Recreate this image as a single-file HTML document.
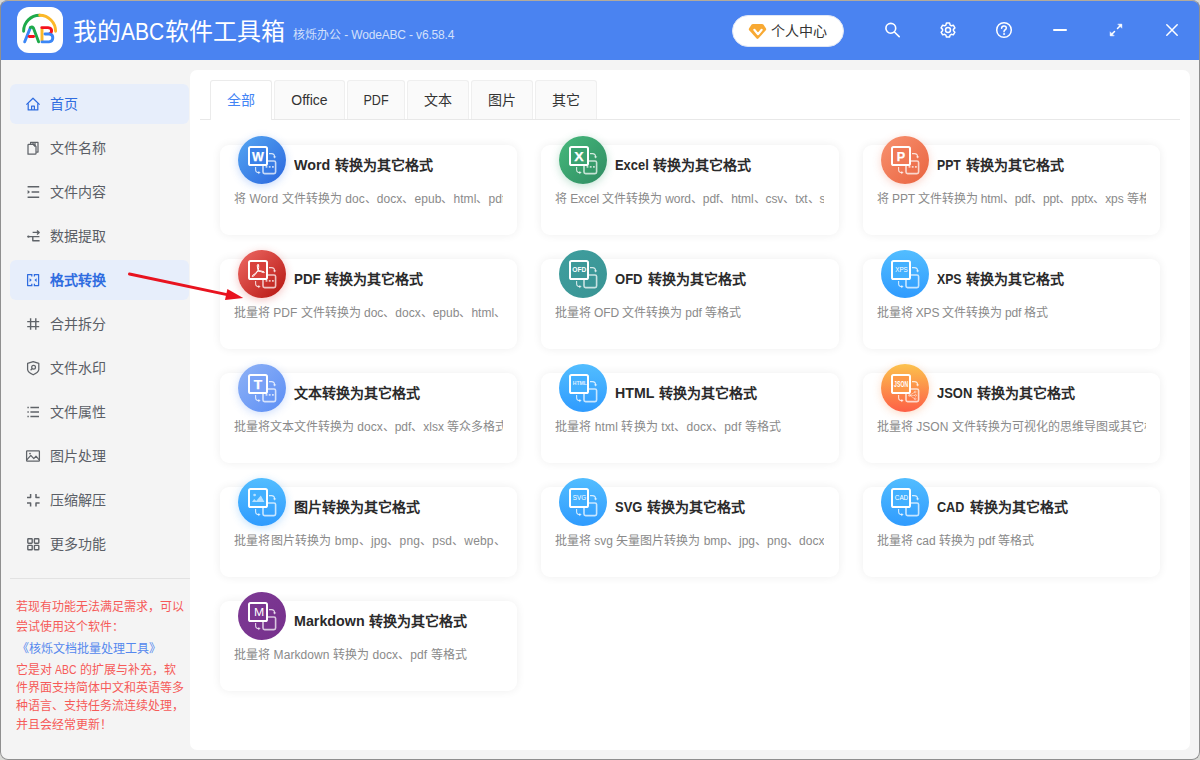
<!DOCTYPE html>
<html lang="zh-CN">
<head>
<meta charset="utf-8">
<title>ABC</title>
<style>
*{box-sizing:border-box;margin:0;padding:0}
html,body{width:1200px;height:760px;overflow:hidden;background:#d9dad6;font-family:"Liberation Sans",sans-serif;}
#win{position:absolute;left:0;top:0;width:1200px;height:760px;border-radius:8px;background:#f4f4f4;overflow:hidden}
#frame{position:absolute;left:0;top:0;width:1200px;height:760px;border-radius:8px;border:1px solid #8f8f8f;border-top-color:#b3aa9b;z-index:100}
#tb{position:absolute;left:0;top:0;width:1200px;height:60px;background:#4a83f1}
.abs{position:absolute;white-space:nowrap}
#logo{position:absolute;left:17.3px;top:7.2px;width:45.5px;height:45.5px;border-radius:12px;background:#fff}
.ttl{top:17px;font-size:24px;line-height:30px;color:#fff}
.sub{top:26.5px;font-size:12px;line-height:16px;color:#d3e0fb;white-space:pre}
#pill{position:absolute;left:732px;top:15px;width:112px;height:32px;border-radius:16px;background:#fff;border:1px solid #dfe6f5}
#pill span{position:absolute;left:38px;top:6px;font-size:14px;line-height:18px;color:#333;white-space:nowrap}
.hl{position:absolute;left:10px;width:179px;height:40px;border-radius:6px;background:#e7eefb}
.si{position:absolute;left:50px;font-size:14px;line-height:20px;color:#5a5e66;white-space:nowrap}
.sic{position:absolute;left:25px;width:16px;height:16px}
#sdiv{position:absolute;left:10px;top:578px;width:180px;height:1px;background:#e2e2e2}
.red{position:absolute;left:16px;font-size:12px;line-height:16px;color:#f65a58;white-space:nowrap}
#main{position:absolute;left:190px;top:70px;width:1000px;height:680px;background:#fff;border-radius:7px}
#tabline{position:absolute;left:200px;top:119px;width:980px;height:1px;background:#e8e8e8}
.tab{position:absolute;top:80px;height:39px;background:#fafafa;border:1px solid #efefef;border-bottom:none;border-radius:3px 3px 0 0;font-size:14px;line-height:39px;color:#333;text-align:center;white-space:nowrap}
.tab.on{background:#fff;color:#4384f5;height:40px;border-color:#ebebeb}
.card{position:absolute;width:297.33px;height:90px;background:#fff;border-radius:9px;box-shadow:0 0 10px rgba(0,0,0,0.07)}
.ct{position:absolute;left:74px;top:10px;font-size:14px;line-height:20px;font-weight:bold;color:#2a2a2a;white-space:nowrap}
.cd{position:absolute;left:14px;top:46px;width:269.3px;overflow:hidden;font-size:12px;line-height:16px;color:#8a8a8a;white-space:nowrap}
.ic{position:absolute;left:18px;top:-9px;width:48px;height:48px;border-radius:50%}
.ic svg{position:absolute;left:0;top:0}
</style>
</head>
<body>
<div id="win">

<div id="tb">
  <div id="logo"></div>
  <svg class="abs" style="left:17.3px;top:7.2px" width="45.5" height="45.5" viewBox="0 0 45.5 45.5" fill="none" stroke-linecap="round" stroke-linejoin="round">
    <path d="M6.6 24.2 A16 16 0 0 1 22.7 8.2" stroke="#1eaa4a" stroke-width="2.9"/>
    <path d="M22.7 8.2 A16 16 0 0 1 38.6 24.2" stroke="#fbb829" stroke-width="2.9"/>
    <path d="M7.7 34.8 L13.4 20.6" stroke="#3b86f6" stroke-width="2.9"/>
    <path d="M13.4 20.6 Q15 19.4 16.4 21 L21.6 34.8" stroke="#1eaa4a" stroke-width="2.9"/>
    <path d="M12.2 29.5 L16.6 29.5" stroke="#f5121d" stroke-width="2.9"/>
    <path d="M25 21.4 L25 33.6" stroke="#fbb829" stroke-width="2.9"/>
    <path d="M24.8 20.6 L31 20.6 Q34.8 21 34.6 24 Q34.4 26 32.8 26.6" stroke="#f5121d" stroke-width="2.9"/>
    <path d="M28 27 L32.4 27 Q36 27.6 35.8 31 Q35.6 34.6 32 34.9 L25 34.9" stroke="#3b86f6" stroke-width="2.9"/>
  </svg>
  <div class="abs ttl" style="left:73px">我的</div><div class="abs ttl" style="left:121.4px;transform-origin:0 50%;transform:scaleX(0.877)">ABC</div><div class="abs ttl" style="left:164.7px">软件工具箱</div>
  <div class="abs sub" style="left:293px">核烁办公</div><div class="abs sub" style="left:341px;letter-spacing:-0.16px"> - WodeABC - v6.58.4</div>
  <div id="pill"><span>个人中心</span></div>
  <svg class="abs" style="left:748px;top:23px" width="19" height="17" viewBox="0 0 19 17">
    <path d="M5 1 L14 1 Q15 1 15.6 1.8 L18 5.4 Q18.6 6.4 17.8 7.3 L10.4 15.6 Q9.5 16.5 8.6 15.6 L1.2 7.3 Q0.4 6.4 1 5.4 L3.4 1.8 Q4 1 5 1 Z" fill="#f8a933"/>
    <path d="M6.3 6.8 L10 11.2 L13.7 6.8" fill="none" stroke="#fff" stroke-width="2.1" stroke-linecap="round" stroke-linejoin="round"/>
  </svg>
  <svg class="abs" style="left:882.5px;top:20px" width="20" height="20" viewBox="0 0 20 20" fill="none" stroke="#fff" stroke-width="1.6" stroke-linecap="round">
    <circle cx="7.8" cy="8.3" r="4.9"/><path d="M11.4 12 L16.2 16.6"/>
  </svg>
  <svg class="abs" style="left:938px;top:20px" width="20" height="20" viewBox="0 0 20 20" fill="none" stroke="#fff" stroke-width="1.6" stroke-linejoin="round"><g transform="translate(10 10.05) scale(0.92) translate(-10 -10.05)">
    <path d="M8.3 2.4 L11.7 2.4 L12.3 4.6 L13.6 5.4 L15.8 4.8 L17.5 7.7 L15.9 9.3 L15.9 10.8 L17.5 12.4 L15.8 15.3 L13.6 14.7 L12.3 15.5 L11.7 17.7 L8.3 17.7 L7.7 15.5 L6.4 14.7 L4.2 15.3 L2.5 12.4 L4.1 10.8 L4.1 9.3 L2.5 7.7 L4.2 4.8 L6.4 5.4 L7.7 4.6 Z"/>
    <circle cx="10" cy="10.05" r="2.7"/></g>
  </svg>
  <svg class="abs" style="left:994px;top:20px" width="20" height="20" viewBox="0 0 20 20" fill="none" stroke="#fff" stroke-width="1.5" stroke-linecap="round">
    <circle cx="10" cy="10" r="7.3"/>
    <path d="M7.6 8.2 Q7.7 5.9 10 5.9 Q12.3 5.9 12.3 8 Q12.3 9.3 10.9 10 Q10 10.5 10 11.7"/>
    <circle cx="10" cy="14" r="0.6" fill="#fff" stroke-width="0.8"/>
  </svg>
  <div class="abs" style="left:1053px;top:29px;width:14px;height:2px;background:#fff;border-radius:1px"></div>
  <svg class="abs" style="left:1106px;top:20px" width="20" height="20" viewBox="0 0 20 20" fill="#fff" stroke="#fff" stroke-width="1.5" stroke-linecap="round">
    <path d="M11.5 8.5 L15 5"/><path d="M8.5 11.5 L5 15"/>
    <path d="M12.2 4.2 L15.8 4.2 L15.8 7.8 Z" stroke-width="0.6" stroke-linejoin="round"/>
    <path d="M7.8 15.8 L4.2 15.8 L4.2 12.2 Z" stroke-width="0.6" stroke-linejoin="round"/>
  </svg>
  <svg class="abs" style="left:1162px;top:20px" width="20" height="20" viewBox="0 0 20 20" fill="none" stroke="#fff" stroke-width="1.5" stroke-linecap="round">
    <path d="M4.8 4.8 L15.2 15.2 M15.2 4.8 L4.8 15.2"/>
  </svg>
</div>

<div class="hl" style="top:84px"></div>
<svg class="sic" style="top:96px" viewBox="0 0 16 16" fill="none" stroke="#2f6ce0" stroke-width="1.25" stroke-linejoin="round" stroke-linecap="butt"><path d="M1.4 8.6 L8 2.2 L14.6 8.6"/><path d="M3.2 7.2 L3.2 13.9 L12.8 13.9 L12.8 7.2"/><path d="M6.6 13.9 L6.6 10.2 L9.4 10.2 L9.4 13.9"/></svg>
<div class="si" style="top:94px;color:#2f6ce0;">首页</div>
<svg class="sic" style="top:140px" viewBox="0 0 16 16" fill="none" stroke="#5f6368" stroke-width="1.25" stroke-linejoin="round" stroke-linecap="butt"><path d="M3 4.8 L3 14.2 L10.2 14.2 Q11 14.2 11 13.4 L11 6.4 L9 4.4 L3.8 4.4 Q3 4.4 3 5.2"/><path d="M5.6 4.2 L5.6 2.4 L13 2.4 L13 12 L11.2 12"/><path d="M8 2.6 L8 4.4 L10 6.4 L10 2.6"/></svg>
<div class="si" style="top:138px;">文件名称</div>
<svg class="sic" style="top:184px" viewBox="0 0 16 16" fill="none" stroke="#5f6368" stroke-width="1.25" stroke-linejoin="round" stroke-linecap="butt"><path d="M2.6 2.8 L14.2 2.8 M6.6 8 L14.2 8 M2.6 13.2 L14.2 13.2" stroke-width="1.5"/><path d="M2.6 6 L5 8 L2.6 10 Z" fill="#5f6368" stroke="none"/></svg>
<div class="si" style="top:182px;">文件内容</div>
<svg class="sic" style="top:228px" viewBox="0 0 16 16" fill="none" stroke="#5f6368" stroke-width="1.25" stroke-linejoin="round" stroke-linecap="butt"><path d="M7.6 4.4 L14 4.4 M12 2.4 L14.2 4.4 L12 6.4 M3.4 8.6 L14.4 8.6 M7.8 8.8 L7.8 12.8 L14.6 12.8" stroke-width="1.4"/><circle cx="3.4" cy="8.6" r="1.2" fill="#5f6368" stroke="none"/></svg>
<div class="si" style="top:226px;">数据提取</div>
<div class="hl" style="top:260px"></div>
<svg class="sic" style="top:272px" viewBox="0 0 16 16" fill="none" stroke="#2f6ce0" stroke-width="1.25" stroke-linejoin="round" stroke-linecap="butt"><path d="M6.8 2.6 L2.6 2.6 L2.6 13.6 L6.8 13.6 M9.4 2.6 L13.6 2.6 L13.6 13.6 L9.4 13.6 M6.8 2 L6.8 4.4 M6.8 11.8 L6.8 14.2 M9.4 2 L9.4 4.4 M9.4 11.8 L9.4 14.2"/><path d="M4.6 6.2 L6.8 8.1 L4.6 10 Z M11.6 6.2 L9.4 8.1 L11.6 10 Z" fill="#2f6ce0" stroke="none"/></svg>
<div class="si" style="top:270px;color:#2f6ce0;font-weight:bold;">格式转换</div>
<svg class="sic" style="top:316px" viewBox="0 0 16 16" fill="none" stroke="#5f6368" stroke-width="1.25" stroke-linejoin="round" stroke-linecap="butt"><path d="M5.6 2.2 L5.6 13.8 M10.8 2.2 L10.8 13.8 M2.2 5.6 L14.2 5.6 M2.2 10.6 L14.2 10.6" stroke-width="1.4"/></svg>
<div class="si" style="top:314px;">合并拆分</div>
<svg class="sic" style="top:360px" viewBox="0 0 16 16" fill="none" stroke="#5f6368" stroke-width="1.25" stroke-linejoin="round" stroke-linecap="butt"><path d="M8.2 1.6 L13.8 3.4 L13.8 9.6 Q13.4 12.4 8.2 14.8 Q3 12.4 2.6 9.6 L2.6 3.4 Z"/><circle cx="8.6" cy="7.2" r="1.9"/><path d="M7.2 8.6 L5.6 10.2"/></svg>
<div class="si" style="top:358px;">文件水印</div>
<svg class="sic" style="top:404px" viewBox="0 0 16 16" fill="none" stroke="#5f6368" stroke-width="1.25" stroke-linejoin="round" stroke-linecap="butt"><path d="M5.4 3.4 L14 3.4 M5.4 8 L14 8 M5.4 12.6 L14 12.6" stroke-width="1.5"/><path d="M2.4 3.4 L3.8 3.4 M2.4 8 L3.8 8 M2.4 12.6 L3.8 12.6" stroke-width="1.5"/></svg>
<div class="si" style="top:402px;">文件属性</div>
<svg class="sic" style="top:448px" viewBox="0 0 16 16" fill="none" stroke="#5f6368" stroke-width="1.25" stroke-linejoin="round" stroke-linecap="butt"><rect x="1.6" y="2.8" width="12.8" height="10.4" rx="0.6"/><path d="M1.8 11.8 L5.8 7.4 L8.8 10.6 L11 8.2 L14.2 11.8"/><circle cx="5" cy="5.6" r="0.9" fill="#5f6368" stroke="none"/></svg>
<div class="si" style="top:446px;">图片处理</div>
<svg class="sic" style="top:492px" viewBox="0 0 16 16" fill="none" stroke="#5f6368" stroke-width="1.25" stroke-linejoin="round" stroke-linecap="butt"><path d="M2 5.6 L5.6 5.6 L5.6 2 M11 2 L11 5.6 L14.6 5.6 M2 11 L5.6 11 L5.6 14.6 M11 14.6 L11 11 L14.6 11" stroke-width="1.5"/></svg>
<div class="si" style="top:490px;">压缩解压</div>
<svg class="sic" style="top:536px" viewBox="0 0 16 16" fill="none" stroke="#5f6368" stroke-width="1.25" stroke-linejoin="round" stroke-linecap="butt"><rect x="2.8" y="2.8" width="4.4" height="4.4" rx="0.6" stroke-width="1.4"/><rect x="9.4" y="2.8" width="4.4" height="4.4" rx="0.6" stroke-width="1.4"/><rect x="2.8" y="9.4" width="4.4" height="4.4" rx="0.6" stroke-width="1.4"/><rect x="9.4" y="9.4" width="4.4" height="4.4" rx="0.6" stroke-width="1.4"/></svg>
<div class="si" style="top:534px;">更多功能</div>
<div id="sdiv"></div>
<div class="red" style="top:599px;left:16px;">若现有功能无法满足需求，可以</div>
<div class="red" style="top:618.5px;left:16px;">尝试使用这个软件：</div>
<div class="red" style="top:640.5px;left:16.8px;color:#5588ee;">《核烁文档批量处理工具》</div>
<div class="red" style="top:661.6px;left:16px;">它是对</div>
<div class="red" style="top:661.6px;left:55.4px;transform-origin:0 50%;transform:scaleX(0.87);">ABC</div>
<div class="red" style="top:661.6px;left:80.4px;">的扩展与补充，软</div>
<div class="red" style="top:680.3px;left:16px;">件界面支持简体中文和英语等多</div>
<div class="red" style="top:698.3px;left:16px;">种语言、支持任务流连续处理，</div>
<div class="red" style="top:716.8px;left:16px;">并且会经常更新！</div>

<div id="main"></div>
<div id="tabline"></div>
<div class="tab on" style="left:210px;width:62px">全部</div>
<div class="tab" style="left:274px;width:71px">Office</div>
<div class="tab" style="left:347px;width:58px"><span style="display:inline-block;transform:scaleX(0.9)">PDF</span></div>
<div class="tab" style="left:407px;width:62px">文本</div>
<div class="tab" style="left:471px;width:62px">图片</div>
<div class="tab" style="left:535px;width:62px">其它</div>

<div class="card" style="left:220px;top:145px"><div class="abs" style="left:0px;top:0"><div class="ic" style="background:linear-gradient(135deg,#55a6f2,#2a66de);box-shadow:0 2px 9px rgba(66,133,244,0.3)"><svg width="48" height="48" viewBox="0 0 48 48" fill="none">
<rect x="25" y="25" width="12.6" height="12.6" rx="1.6" stroke="#fff" stroke-opacity="0.72" stroke-width="1.6"/>
<path d="M27.6 30.8 L29.4 30.8 M30.8 30.8 L32.6 30.8 M34 30.8 L35.8 30.8" stroke="#fff" stroke-opacity="0.7" stroke-width="1.7"/>
<path d="M31 17.6 L33.4 17.6 Q36.6 17.6 36.6 21" stroke="#fff" stroke-opacity="0.78" stroke-width="1.1"/><path d="M34.9 20.4 L36.6 22.6 L38.3 20.4 Z" fill="#fff" fill-opacity="0.75"/>
<path d="M17.6 31 L17.6 33.4 Q17.6 36.6 21 36.6" stroke="#fff" stroke-opacity="0.78" stroke-width="1.1"/><path d="M20.4 34.9 L22.6 36.6 L20.4 38.3 Z" fill="#fff" fill-opacity="0.75"/>
<rect x="11" y="11" width="18" height="18" rx="1.6" stroke="#fff" stroke-width="2" fill="#3b82e8"/>
<text x="20" y="25" font-family="Liberation Sans, sans-serif" fill="#fff" text-anchor="middle" lengthAdjust="spacingAndGlyphs" font-weight="bold" font-size="13.5" stroke="#fff" stroke-width="0.25" textLength="11.8">W</text>
</svg></div><div class="ct" style="transform-origin:0 50%;transform:scaleX(1.02)">Word</div><div class="ct" style="left:115.1px;">转换为其它格式</div><div class="cd" style="letter-spacing:0.06px">将 Word 文件转换为 doc、docx、epub、html、pdf、txt 等</div></div></div>
<div class="card" style="left:541.33px;top:145px"><div class="abs" style="left:-0.33px;top:0"><div class="ic" style="background:linear-gradient(135deg,#46b97c,#2f8c62);box-shadow:0 2px 9px rgba(52,160,108,0.3)"><svg width="48" height="48" viewBox="0 0 48 48" fill="none">
<rect x="25" y="25" width="12.6" height="12.6" rx="1.6" stroke="#fff" stroke-opacity="0.72" stroke-width="1.6"/>
<path d="M27.6 30.8 L29.4 30.8 M30.8 30.8 L32.6 30.8 M34 30.8 L35.8 30.8" stroke="#fff" stroke-opacity="0.7" stroke-width="1.7"/>
<path d="M31 17.6 L33.4 17.6 Q36.6 17.6 36.6 21" stroke="#fff" stroke-opacity="0.78" stroke-width="1.1"/><path d="M34.9 20.4 L36.6 22.6 L38.3 20.4 Z" fill="#fff" fill-opacity="0.75"/>
<path d="M17.6 31 L17.6 33.4 Q17.6 36.6 21 36.6" stroke="#fff" stroke-opacity="0.78" stroke-width="1.1"/><path d="M20.4 34.9 L22.6 36.6 L20.4 38.3 Z" fill="#fff" fill-opacity="0.75"/>
<rect x="11" y="11" width="18" height="18" rx="1.6" stroke="#fff" stroke-width="2" fill="#3aa371"/>
<text x="20" y="25" font-family="Liberation Sans, sans-serif" fill="#fff" text-anchor="middle" lengthAdjust="spacingAndGlyphs" font-weight="bold" font-size="13.5" stroke="#fff" stroke-width="0.25" textLength="9.4">X</text>
</svg></div><div class="ct" style="transform-origin:0 50%;transform:scaleX(0.922)">Excel</div><div class="ct" style="left:111.8px;">转换为其它格式</div><div class="cd" style="letter-spacing:-0.08px">将 Excel 文件转换为 word、pdf、html、csv、txt、svg 等</div></div></div>
<div class="card" style="left:862.67px;top:145px"><div class="abs" style="left:0.33px;top:0"><div class="ic" style="background:linear-gradient(135deg,#f89270,#e9633f);box-shadow:0 2px 9px rgba(240,120,90,0.3)"><svg width="48" height="48" viewBox="0 0 48 48" fill="none">
<rect x="25" y="25" width="12.6" height="12.6" rx="1.6" stroke="#fff" stroke-opacity="0.72" stroke-width="1.6"/>
<path d="M27.6 30.8 L29.4 30.8 M30.8 30.8 L32.6 30.8 M34 30.8 L35.8 30.8" stroke="#fff" stroke-opacity="0.7" stroke-width="1.7"/>
<path d="M31 17.6 L33.4 17.6 Q36.6 17.6 36.6 21" stroke="#fff" stroke-opacity="0.78" stroke-width="1.1"/><path d="M34.9 20.4 L36.6 22.6 L38.3 20.4 Z" fill="#fff" fill-opacity="0.75"/>
<path d="M17.6 31 L17.6 33.4 Q17.6 36.6 21 36.6" stroke="#fff" stroke-opacity="0.78" stroke-width="1.1"/><path d="M20.4 34.9 L22.6 36.6 L20.4 38.3 Z" fill="#fff" fill-opacity="0.75"/>
<rect x="11" y="11" width="18" height="18" rx="1.6" stroke="#fff" stroke-width="2" fill="#f07a57"/>
<text x="20" y="25" font-family="Liberation Sans, sans-serif" fill="#fff" text-anchor="middle" lengthAdjust="spacingAndGlyphs" font-weight="bold" font-size="13.5" stroke="#fff" stroke-width="0.25" textLength="8.4">P</text>
</svg></div><div class="ct" style="transform-origin:0 50%;transform:scaleX(0.875)">PPT</div><div class="ct" style="left:103.1px;">转换为其它格式</div><div class="cd" style="letter-spacing:-0.12px">将 PPT 文件转换为 html、pdf、ppt、pptx、xps 等格式</div></div></div>
<div class="card" style="left:220px;top:259px"><div class="abs" style="left:0px;top:0"><div class="ic" style="background:linear-gradient(135deg,#ee6a65,#b5140f);box-shadow:0 2px 9px rgba(220,60,55,0.3)"><svg width="48" height="48" viewBox="0 0 48 48" fill="none">
<rect x="25" y="25" width="12.6" height="12.6" rx="1.6" stroke="#fff" stroke-opacity="0.72" stroke-width="1.6"/>
<path d="M27.6 30.8 L29.4 30.8 M30.8 30.8 L32.6 30.8 M34 30.8 L35.8 30.8" stroke="#fff" stroke-opacity="0.7" stroke-width="1.7"/>
<path d="M31 17.6 L33.4 17.6 Q36.6 17.6 36.6 21" stroke="#fff" stroke-opacity="0.78" stroke-width="1.1"/><path d="M34.9 20.4 L36.6 22.6 L38.3 20.4 Z" fill="#fff" fill-opacity="0.75"/>
<path d="M17.6 31 L17.6 33.4 Q17.6 36.6 21 36.6" stroke="#fff" stroke-opacity="0.78" stroke-width="1.1"/><path d="M20.4 34.9 L22.6 36.6 L20.4 38.3 Z" fill="#fff" fill-opacity="0.75"/>
<rect x="11" y="11" width="18" height="18" rx="1.6" stroke="#fff" stroke-width="2" fill="#d8403b"/>
<path d="M20 14.2 Q18.8 14.4 19.4 17 Q20 20 19.8 20.6 Q17.5 24 14.6 25.4 Q13.4 26.4 14.8 26.6 Q16.6 25.8 19.8 21 Q23 21.4 25.4 22.6 Q27 22.8 26 21.8 Q23.5 20.8 20.2 20.6 Q21 17 20.6 15 Q20.4 14.2 20 14.2 Z" stroke="#fff" stroke-width="1" stroke-linejoin="round" fill="none"/>
</svg></div><div class="ct" style="transform-origin:0 50%;transform:scaleX(0.952)">PDF</div><div class="ct" style="left:104.6px;">转换为其它格式</div><div class="cd" style="letter-spacing:0px">批量将 PDF 文件转换为 doc、docx、epub、html、</div></div></div>
<div class="card" style="left:541.33px;top:259px"><div class="abs" style="left:-0.33px;top:0"><div class="ic" style="background:linear-gradient(135deg,#3f9e9e,#3a9494);"><svg width="48" height="48" viewBox="0 0 48 48" fill="none">
<rect x="25" y="25" width="12.6" height="12.6" rx="1.6" stroke="#fff" stroke-opacity="0.72" stroke-width="1.6"/>

<path d="M31 17.6 L33.4 17.6 Q36.6 17.6 36.6 21" stroke="#fff" stroke-opacity="0.78" stroke-width="1.1"/><path d="M34.9 20.4 L36.6 22.6 L38.3 20.4 Z" fill="#fff" fill-opacity="0.75"/>
<path d="M17.6 31 L17.6 33.4 Q17.6 36.6 21 36.6" stroke="#fff" stroke-opacity="0.78" stroke-width="1.1"/><path d="M20.4 34.9 L22.6 36.6 L20.4 38.3 Z" fill="#fff" fill-opacity="0.75"/>
<rect x="11" y="11" width="18" height="18" rx="1.6" stroke="#fff" stroke-width="2" fill="#3d9999"/>
<text x="20.3" y="21.9" font-family="Liberation Sans, sans-serif" fill="#fff" text-anchor="middle" lengthAdjust="spacingAndGlyphs" font-weight="bold" font-size="6.9" textLength="14">OFD</text>
</svg></div><div class="ct" style="transform-origin:0 50%;transform:scaleX(0.93)">OFD</div><div class="ct" style="left:106.8px;">转换为其它格式</div><div class="cd" style="letter-spacing:-0.07px">批量将 OFD 文件转换为 pdf 等格式</div></div></div>
<div class="card" style="left:862.67px;top:259px"><div class="abs" style="left:0.33px;top:0"><div class="ic" style="background:linear-gradient(180deg,#52bdff,#2f9bfe);"><svg width="48" height="48" viewBox="0 0 48 48" fill="none">
<rect x="25" y="25" width="12.6" height="12.6" rx="1.6" stroke="#fff" stroke-opacity="0.72" stroke-width="1.6"/>

<path d="M31 17.6 L33.4 17.6 Q36.6 17.6 36.6 21" stroke="#fff" stroke-opacity="0.78" stroke-width="1.1"/><path d="M34.9 20.4 L36.6 22.6 L38.3 20.4 Z" fill="#fff" fill-opacity="0.75"/>
<path d="M17.6 31 L17.6 33.4 Q17.6 36.6 21 36.6" stroke="#fff" stroke-opacity="0.78" stroke-width="1.1"/><path d="M20.4 34.9 L22.6 36.6 L20.4 38.3 Z" fill="#fff" fill-opacity="0.75"/>
<rect x="11" y="11" width="18" height="18" rx="1.6" stroke="#fff" stroke-width="2" fill="#43b0ff"/>
<text x="20.5" y="22.1" font-family="Liberation Sans, sans-serif" fill="#fff" text-anchor="middle" lengthAdjust="spacingAndGlyphs" font-size="7.8" textLength="12.6">XPS</text>
</svg></div><div class="ct" style="transform-origin:0 50%;transform:scaleX(0.875)">XPS</div><div class="ct" style="left:103.4px;">转换为其它格式</div><div class="cd" style="letter-spacing:-0.15px">批量将 XPS 文件转换为 pdf 格式</div></div></div>
<div class="card" style="left:220px;top:373px"><div class="abs" style="left:0px;top:0"><div class="ic" style="background:linear-gradient(135deg,#8fb2f6,#5b8ef5);box-shadow:0 2px 9px rgba(100,150,245,0.3)"><svg width="48" height="48" viewBox="0 0 48 48" fill="none">
<rect x="25" y="25" width="12.6" height="12.6" rx="1.6" stroke="#fff" stroke-opacity="0.72" stroke-width="1.6"/>
<path d="M27.6 30.8 L29.4 30.8 M30.8 30.8 L32.6 30.8 M34 30.8 L35.8 30.8" stroke="#fff" stroke-opacity="0.7" stroke-width="1.7"/>
<path d="M31 17.6 L33.4 17.6 Q36.6 17.6 36.6 21" stroke="#fff" stroke-opacity="0.78" stroke-width="1.1"/><path d="M34.9 20.4 L36.6 22.6 L38.3 20.4 Z" fill="#fff" fill-opacity="0.75"/>
<path d="M17.6 31 L17.6 33.4 Q17.6 36.6 21 36.6" stroke="#fff" stroke-opacity="0.78" stroke-width="1.1"/><path d="M20.4 34.9 L22.6 36.6 L20.4 38.3 Z" fill="#fff" fill-opacity="0.75"/>
<rect x="11" y="11" width="18" height="18" rx="1.6" stroke="#fff" stroke-width="2" fill="#7aa2f6"/>
<text x="20" y="25" font-family="Liberation Sans, sans-serif" fill="#fff" text-anchor="middle" lengthAdjust="spacingAndGlyphs" font-weight="bold" font-size="13.5" stroke="#fff" stroke-width="0.25" textLength="8.4">T</text>
</svg></div><div class="ct">文本转换为其它格式</div><div class="cd" style="letter-spacing:0px">批量将文本文件转换为 docx、pdf、xlsx 等众多格式</div></div></div>
<div class="card" style="left:541.33px;top:373px"><div class="abs" style="left:-0.33px;top:0"><div class="ic" style="background:linear-gradient(180deg,#52bdff,#2f9bfe);"><svg width="48" height="48" viewBox="0 0 48 48" fill="none">
<rect x="25" y="25" width="12.6" height="12.6" rx="1.6" stroke="#fff" stroke-opacity="0.72" stroke-width="1.6"/>

<path d="M31 17.6 L33.4 17.6 Q36.6 17.6 36.6 21" stroke="#fff" stroke-opacity="0.78" stroke-width="1.1"/><path d="M34.9 20.4 L36.6 22.6 L38.3 20.4 Z" fill="#fff" fill-opacity="0.75"/>
<path d="M17.6 31 L17.6 33.4 Q17.6 36.6 21 36.6" stroke="#fff" stroke-opacity="0.78" stroke-width="1.1"/><path d="M20.4 34.9 L22.6 36.6 L20.4 38.3 Z" fill="#fff" fill-opacity="0.75"/>
<rect x="11" y="11" width="18" height="18" rx="1.6" stroke="#fff" stroke-width="2" fill="#43b0ff"/>
<text x="20.9" y="21.1" font-family="Liberation Sans, sans-serif" fill="#fff" text-anchor="middle" lengthAdjust="spacingAndGlyphs" font-weight="bold" font-size="5.7" fill-opacity="0.85" textLength="14.2">HTML</text>
</svg></div><div class="ct" style="transform-origin:0 50%;transform:scaleX(1.012)">HTML</div><div class="ct" style="left:118.4px;">转换为其它格式</div><div class="cd" style="letter-spacing:0.12px">批量将 html 转换为 txt、docx、pdf 等格式</div></div></div>
<div class="card" style="left:862.67px;top:373px"><div class="abs" style="left:0.33px;top:0"><div class="ic" style="background:linear-gradient(180deg,#fcc24d,#fd5f46);box-shadow:0 2px 9px rgba(250,140,70,0.3)"><svg width="48" height="48" viewBox="0 0 48 48" fill="none">
<rect x="25" y="25" width="12.6" height="12.6" rx="1.6" stroke="#fff" stroke-opacity="0.72" stroke-width="1.6"/>
<g stroke="#fff" stroke-opacity="0.6" stroke-width="0.8" fill="none"><path d="M28.6 31.4 L33.6 28.2 M28.6 31.4 L34 31.4 M28.6 31.4 L33.6 34.6"/><circle cx="34.2" cy="28" r="0.9"/><circle cx="34.6" cy="31.4" r="0.9"/><circle cx="34.2" cy="34.8" r="0.9"/><circle cx="28.4" cy="31.4" r="0.9"/></g>
<path d="M31 17.6 L33.4 17.6 Q36.6 17.6 36.6 21" stroke="#fff" stroke-opacity="0.78" stroke-width="1.1"/><path d="M34.9 20.4 L36.6 22.6 L38.3 20.4 Z" fill="#fff" fill-opacity="0.75"/>
<path d="M17.6 31 L17.6 33.4 Q17.6 36.6 21 36.6" stroke="#fff" stroke-opacity="0.78" stroke-width="1.1"/><path d="M20.4 34.9 L22.6 36.6 L20.4 38.3 Z" fill="#fff" fill-opacity="0.75"/>
<rect x="11" y="11" width="18" height="18" rx="1.6" stroke="#fff" stroke-width="2" fill="#fd9a4a"/>
<text x="20.1" y="23" font-family="Liberation Sans, sans-serif" fill="#fff" text-anchor="middle" lengthAdjust="spacingAndGlyphs" font-weight="bold" font-size="8.4" textLength="14">JSON</text>
</svg></div><div class="ct" style="transform-origin:0 50%;transform:scaleX(0.925)">JSON</div><div class="ct" style="left:113.8px;">转换为其它格式</div><div class="cd" style="letter-spacing:0px">批量将 JSON 文件转换为可视化的思维导图或其它格式</div></div></div>
<div class="card" style="left:220px;top:487px"><div class="abs" style="left:0px;top:0"><div class="ic" style="background:linear-gradient(180deg,#52bdff,#2f9bfe);box-shadow:0 2px 9px rgba(60,160,250,0.3)"><svg width="48" height="48" viewBox="0 0 48 48" fill="none">
<rect x="25" y="25" width="12.6" height="12.6" rx="1.6" stroke="#fff" stroke-opacity="0.72" stroke-width="1.6"/>

<path d="M31 17.6 L33.4 17.6 Q36.6 17.6 36.6 21" stroke="#fff" stroke-opacity="0.78" stroke-width="1.1"/><path d="M34.9 20.4 L36.6 22.6 L38.3 20.4 Z" fill="#fff" fill-opacity="0.75"/>
<path d="M17.6 31 L17.6 33.4 Q17.6 36.6 21 36.6" stroke="#fff" stroke-opacity="0.78" stroke-width="1.1"/><path d="M20.4 34.9 L22.6 36.6 L20.4 38.3 Z" fill="#fff" fill-opacity="0.75"/>
<rect x="11" y="11" width="18" height="18" rx="1.6" stroke="#fff" stroke-width="2" fill="#43b0ff"/>
<path d="M14 24.1 L16.2 20.9 L18.2 22.9 L22.8 17.6 L26.4 24.1 Z" fill="#fff" fill-opacity="0.62"/><circle cx="16.6" cy="17" r="1.35" fill="#fff" fill-opacity="0.62"/>
</svg></div><div class="ct">图片转换为其它格式</div><div class="cd" style="letter-spacing:0.17px">批量将图片转换为 bmp、jpg、png、psd、webp、</div></div></div>
<div class="card" style="left:541.33px;top:487px"><div class="abs" style="left:-0.33px;top:0"><div class="ic" style="background:linear-gradient(180deg,#52bdff,#2f9bfe);"><svg width="48" height="48" viewBox="0 0 48 48" fill="none">
<rect x="25" y="25" width="12.6" height="12.6" rx="1.6" stroke="#fff" stroke-opacity="0.72" stroke-width="1.6"/>

<path d="M31 17.6 L33.4 17.6 Q36.6 17.6 36.6 21" stroke="#fff" stroke-opacity="0.78" stroke-width="1.1"/><path d="M34.9 20.4 L36.6 22.6 L38.3 20.4 Z" fill="#fff" fill-opacity="0.75"/>
<path d="M17.6 31 L17.6 33.4 Q17.6 36.6 21 36.6" stroke="#fff" stroke-opacity="0.78" stroke-width="1.1"/><path d="M20.4 34.9 L22.6 36.6 L20.4 38.3 Z" fill="#fff" fill-opacity="0.75"/>
<rect x="11" y="11" width="18" height="18" rx="1.6" stroke="#fff" stroke-width="2" fill="#43b0ff"/>
<text x="20.5" y="22.1" font-family="Liberation Sans, sans-serif" fill="#fff" text-anchor="middle" lengthAdjust="spacingAndGlyphs" font-size="7.8" textLength="13.3">SVG</text>
</svg></div><div class="ct" style="transform-origin:0 50%;transform:scaleX(0.928)">SVG</div><div class="ct" style="left:105.6px;">转换为其它格式</div><div class="cd" style="letter-spacing:0px">批量将 svg 矢量图片转换为 bmp、jpg、png、docx</div></div></div>
<div class="card" style="left:862.67px;top:487px"><div class="abs" style="left:0.33px;top:0"><div class="ic" style="background:linear-gradient(180deg,#52bdff,#2f9bfe);"><svg width="48" height="48" viewBox="0 0 48 48" fill="none">
<rect x="25" y="25" width="12.6" height="12.6" rx="1.6" stroke="#fff" stroke-opacity="0.72" stroke-width="1.6"/>

<path d="M31 17.6 L33.4 17.6 Q36.6 17.6 36.6 21" stroke="#fff" stroke-opacity="0.78" stroke-width="1.1"/><path d="M34.9 20.4 L36.6 22.6 L38.3 20.4 Z" fill="#fff" fill-opacity="0.75"/>
<path d="M17.6 31 L17.6 33.4 Q17.6 36.6 21 36.6" stroke="#fff" stroke-opacity="0.78" stroke-width="1.1"/><path d="M20.4 34.9 L22.6 36.6 L20.4 38.3 Z" fill="#fff" fill-opacity="0.75"/>
<rect x="11" y="11" width="18" height="18" rx="1.6" stroke="#fff" stroke-width="2" fill="#43b0ff"/>
<text x="20.5" y="22.1" font-family="Liberation Sans, sans-serif" fill="#fff" text-anchor="middle" lengthAdjust="spacingAndGlyphs" font-size="7.8" textLength="13.4">CAD</text>
</svg></div><div class="ct" style="transform-origin:0 50%;transform:scaleX(0.9)">CAD</div><div class="ct" style="left:106.8px;">转换为其它格式</div><div class="cd" style="letter-spacing:0px">批量将 cad 转换为 pdf 等格式</div></div></div>
<div class="card" style="left:220px;top:601px"><div class="abs" style="left:0px;top:0"><div class="ic" style="background:linear-gradient(135deg,#7d3a94,#76308c);"><svg width="48" height="48" viewBox="0 0 48 48" fill="none">
<rect x="25" y="25" width="12.6" height="12.6" rx="1.6" stroke="#fff" stroke-opacity="0.72" stroke-width="1.6"/>

<path d="M31 17.6 L33.4 17.6 Q36.6 17.6 36.6 21" stroke="#fff" stroke-opacity="0.78" stroke-width="1.1"/><path d="M34.9 20.4 L36.6 22.6 L38.3 20.4 Z" fill="#fff" fill-opacity="0.75"/>
<path d="M17.6 31 L17.6 33.4 Q17.6 36.6 21 36.6" stroke="#fff" stroke-opacity="0.78" stroke-width="1.1"/><path d="M20.4 34.9 L22.6 36.6 L20.4 38.3 Z" fill="#fff" fill-opacity="0.75"/>
<rect x="11" y="11" width="18" height="18" rx="1.6" stroke="#fff" stroke-width="2" fill="#7a3590"/>
<text x="21" y="24" font-family="Liberation Sans, sans-serif" fill="#fff" text-anchor="middle" lengthAdjust="spacingAndGlyphs" font-size="11.2" textLength="10.2">M</text>
</svg></div><div class="ct" style="transform-origin:0 50%;transform:scaleX(1.02)">Markdown</div><div class="ct" style="left:148.9px;">转换为其它格式</div><div class="cd" style="letter-spacing:0.07px">批量将 Markdown 转换为 docx、pdf 等格式</div></div></div>

<svg class="abs" style="left:120px;top:262px;z-index:20" width="130" height="44" viewBox="0 0 130 44"><path d="M9.5 12 L107 32.6" stroke="#e8131f" stroke-width="3" stroke-linecap="round"/><path d="M123.2 35.9 L105 38 L107.4 27 Z" fill="#e8131f"/></svg>

</div>
<div id="frame"></div>
</body>
</html>
